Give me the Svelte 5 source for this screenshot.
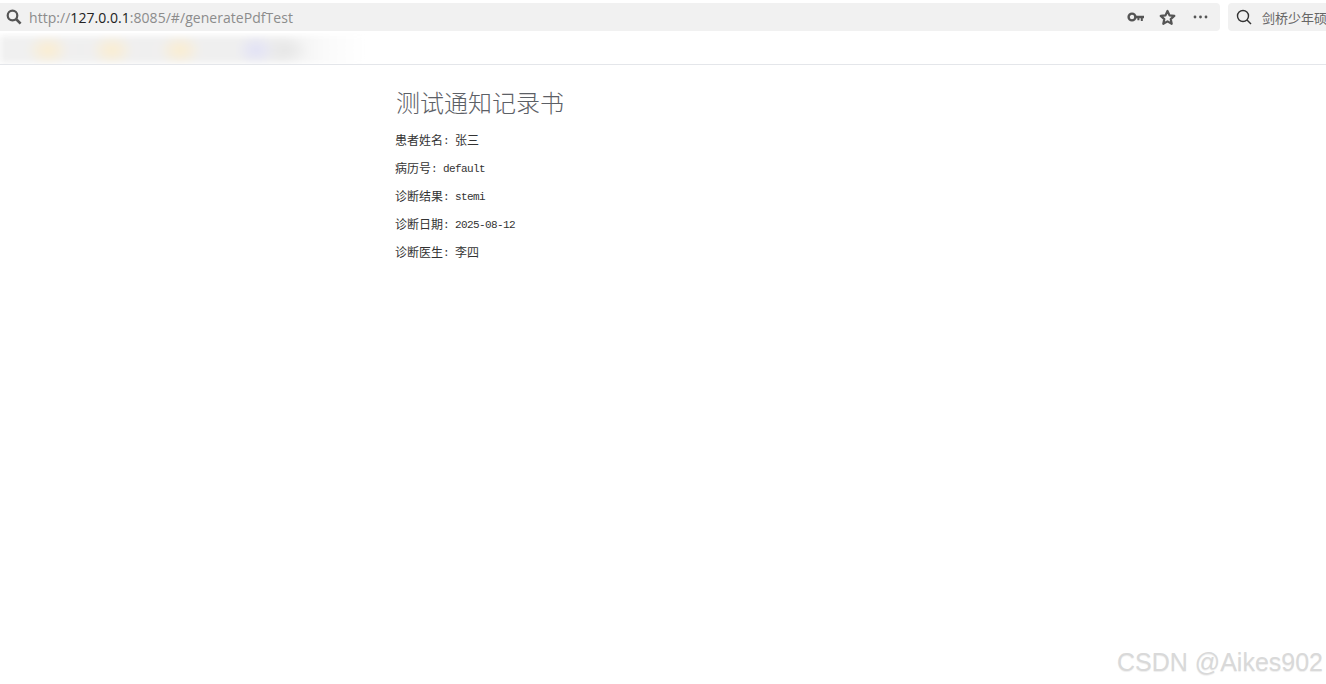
<script>
	const fields = [
		{ label: '患者姓名', value: '张三', cjk: true },
		{ label: '病历号', value: 'default' },
		{ label: '诊断结果', value: 'stemi' },
		{ label: '诊断日期', value: '2025-08-12' },
		{ label: '诊断医生', value: '李四', cjk: true }
	];
</script>

<div class="browser">
	<header class="toolbar">
		<div class="address">
			<svg class="icon" width="16" height="16" viewBox="0 0 16 16">
				<circle cx="6.5" cy="6.5" r="4.8" fill="none" stroke="#555" stroke-width="2.2" />
				<path d="M10 10l4.6 4.6" stroke="#555" stroke-width="2.6" />
			</svg>
			<span class="url">http://<b>127.0.0.1</b>:8085/#/generatePdfTest</span>
			<div class="actions">
				<svg width="18" height="12" viewBox="0 0 18 12">
					<circle cx="5" cy="6" r="3.4" fill="none" stroke="#555" stroke-width="2.4" />
					<path d="M8 4.7h9v2.6h-1.2v2.6h-2V7.3h-1.4v2h-2V7.3H8z" fill="#555" />
				</svg>
				<svg width="17" height="17" viewBox="0 0 17 17">
					<path d="M8.5 2l2 4.4 4.8.5-3.6 3.2 1 4.7-4.2-2.4-4.2 2.4 1-4.7L1.7 6.9l4.8-.5z" fill="none" stroke="#555" stroke-width="2.2" stroke-linejoin="round" />
				</svg>
				<svg width="15" height="4" viewBox="0 0 15 4">
					<circle cx="2" cy="2" r="1.4" fill="#555" />
					<circle cx="7.5" cy="2" r="1.4" fill="#555" />
					<circle cx="13" cy="2" r="1.4" fill="#555" />
				</svg>
			</div>
		</div>
		<div class="search">
			<svg width="16" height="16" viewBox="0 0 16 16">
				<circle cx="7" cy="7" r="5.5" fill="none" stroke="#333" stroke-width="1.4" />
				<path d="M11 11l4 4" stroke="#333" stroke-width="1.4" />
			</svg>
			<span>剑桥少年硕</span>
		</div>
	</header>

	<div class="bookmarks">
		<div class="smear"></div>
	</div>

	<main class="doc">
		<h1>测试通知记录书</h1>
		{#each fields as f}
			<p>{f.label}<span class="latin">{': '}</span><span class={f.cjk ? '' : 'latin'}>{f.value}</span></p>
		{/each}
	</main>

	<div class="watermark">CSDN @Aikes902</div>
</div>

<style>
	:global(body) {
		background: #fff;
	}

	.browser {
		height: 684px;
		overflow: hidden;
		position: relative;
		font-family: "Liberation Sans", "Noto Sans CJK SC", sans-serif;
	}

	.toolbar {
		display: flex;
		gap: 8px;
		padding-top: 3px;
		height: 33px;
		box-sizing: border-box;
	}

	.address {
		width: 1220px;
		height: 28px;
		flex: none;
		background: #f1f1f1;
		border-radius: 0 4px 4px 0;
		display: flex;
		align-items: center;
		padding-left: 6px;
		box-sizing: border-box;
	}

	.icon {
		margin-right: 7px;
	}

	.url {
		font-family: "Open Sans", sans-serif;
		font-size: 14px;
		letter-spacing: 0.04px;
		color: #8c8c8c;
	}

	.url b {
		font-weight: 400;
		color: #222;
	}

	.actions {
		margin-left: auto;
		display: flex;
		align-items: center;
		gap: 15px;
		padding-right: 12px;
	}

	.actions svg:nth-child(2) {
		margin: 0 2px 0 -1px;
	}

	.search {
		flex: 1;
		min-width: 0;
		height: 28px;
		background: #f1f1f1;
		border-radius: 4px 0 0 4px;
		display: flex;
		align-items: center;
		gap: 10px;
		padding-left: 8px;
		font-size: 13px;
		color: #666;
		white-space: nowrap;
		overflow: hidden;
	}

	.search svg {
		flex: none;
	}

	.bookmarks {
		height: 31px;
		border-bottom: 1px solid #e4e6ea;
		overflow: hidden;
	}

	.smear {
		margin-top: 3px;
		width: 365px;
		height: 27px;
		filter: blur(3px);
		background:
			radial-gradient(ellipse 22px 16px at 48px 14px, #fbedd0, transparent),
			radial-gradient(ellipse 22px 16px at 112px 14px, #fbedd0, transparent),
			radial-gradient(ellipse 22px 16px at 180px 14px, #fbedd0, transparent),
			radial-gradient(ellipse 20px 16px at 256px 14px, #e1e1f6, transparent),
			radial-gradient(ellipse 24px 14px at 285px 14px, #e6e6e6, transparent),
			linear-gradient(90deg, #f0f0f0 0, #efefef 280px, #fafafa 325px, #fff 365px);
	}

	.doc {
		width: 536px;
		margin: 0 auto;
		font-family: "Noto Sans CJK SC", sans-serif;
		font-size: 12px;
		color: #333;
	}

	.latin {
		font-family: "Liberation Mono", monospace;
		font-size: 11px;
		letter-spacing: -0.6px;
		white-space: pre;
		vertical-align: 1px;
	}

	h1 {
		margin: 0;
		padding: 22px 0 0 1px;
		font-size: 24px;
		font-weight: 300;
		line-height: 30px;
		color: #5c6066;
		font-family: "Noto Sans CJK SC", serif;
	}

	p {
		margin: 0;
		height: 28px;
		line-height: 28px;
	}

	h1 + p {
		margin-top: 9px;
	}

	.watermark {
		position: absolute;
		right: 3px;
		bottom: 7px;
		font-size: 25px;
		color: #d9d9d9;
		text-shadow: 0 1px 1px #eee;
	}
</style>
